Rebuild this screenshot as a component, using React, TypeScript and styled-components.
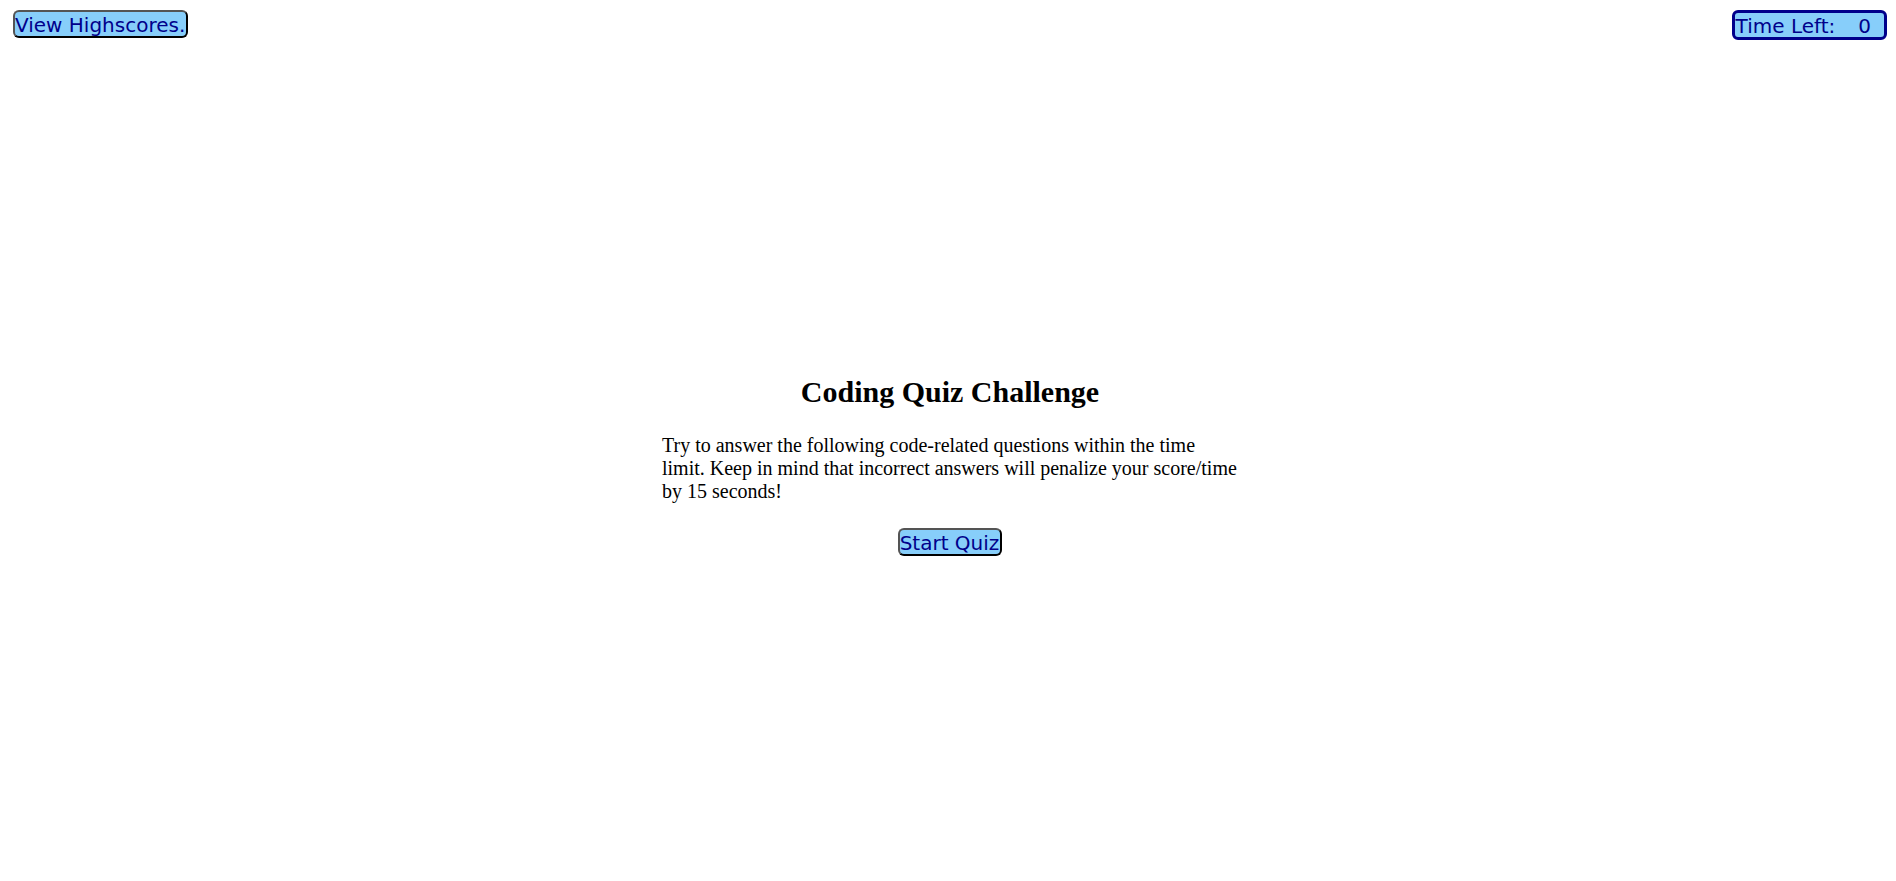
import React from "react";
import styled, { createGlobalStyle } from "styled-components";

const GlobalStyle = createGlobalStyle`
  body { margin: 0; background: #fff; color: #000; font-family: "Liberation Serif", "Times New Roman", serif; }
`;
const Page = styled.div`
  display: flex;
  flex-direction: column;
  padding: 10px 9px 0 13px;
  font-size: 20px;
`;
const TopBar = styled.header`
  display: flex;
  justify-content: space-between;
  align-items: flex-start;
`;
const QuizButton = styled.button`
  padding: 2px 1px 0 0;
  border: 2px outset #000;
  border-radius: 6px;
  background: lightskyblue;
  color: darkblue;
  font: 20px/22px Verdana, "DejaVu Sans", sans-serif;
`;
const Timer = styled.div`
  display: flex;
  gap: 23px;
  padding: 2px 13px 0 1px;
  border: 3px solid darkblue;
  border-radius: 6px;
  background: lightskyblue;
  color: darkblue;
  font: 20px/22px Verdana, "DejaVu Sans", sans-serif;
`;
const Intro = styled.main`
  display: flex;
  flex-direction: column;
  align-items: center;
  align-self: center;
  width: 576px;
  max-width: 100%;
  margin-top: 335px;
`;
const Title = styled.h1`
  margin: 0;
  font-size: 30px;
  line-height: 34px;
`;
const Rules = styled.p`
  margin: 25px 0;
  line-height: 23px;
`;

export default function App() {
  return (
    <Page>
      <GlobalStyle />
      <TopBar>
        <QuizButton type="button">View Highscores.</QuizButton>
        <Timer role="timer"><span>Time Left:</span><span>0</span></Timer>
      </TopBar>
      <Intro>
        <Title>Coding Quiz Challenge</Title>
        <Rules>
          Try to answer the following code-related questions within the time
          limit. Keep in mind that incorrect answers will penalize your
          score/time by 15 seconds!
        </Rules>
        <QuizButton type="button">Start Quiz</QuizButton>
      </Intro>
    </Page>
  );
}
